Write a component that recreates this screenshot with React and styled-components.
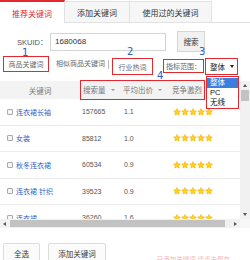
import React from "react";
import styled, { createGlobalStyle } from "styled-components";

const RED = "#e3282e";
const BLUE_NUM = "#2b5cc9";

const GlobalStyle = createGlobalStyle`
  html, body {
    margin: 0;
    padding: 0;
    background: #fff;
  }
  body {
    font-family: "Liberation Sans", "Noto Sans CJK SC", sans-serif;
    color: #333;
  }
`;

const Page = styled.div`
  width: 250px;
  height: 260px;
  overflow: hidden;
  position: relative;
  background: #fff;
`;

const TabBar = styled.div`
  display: flex;
  height: 22px;
  border-bottom: 1px solid #e2e2e2;
`;

const Tab = styled.div`
  box-sizing: border-box;
  width: ${(p) => p.$w}px;
  display: flex;
  align-items: center;
  justify-content: center;
  font-size: 8px;
  margin-top: ${(p) => (p.$active ? 0 : 1)}px;
  color: ${(p) => (p.$active ? RED : "#333")};
  background: ${(p) => (p.$active ? "#fff" : "#f6f6f6")};
  border-top: ${(p) => (p.$active ? `2px solid ${RED}` : "1px solid #e2e2e2")};
  border-right: 1px solid #e2e2e2;
  margin-bottom: ${(p) => (p.$active ? "-1px" : "0")};
  padding-top: 1px;
`;

const SkuRow = styled.div`
  display: flex;
  align-items: center;
  height: 21px;
  margin-top: 8px;
  padding-left: 17px;
`;

const Label = styled.span`
  width: 33px;
  font-size: 7.5px;
  color: #555;
`;

const Input = styled.div`
  box-sizing: border-box;
  width: 116px;
  height: 18px;
  border: 1px solid #d4d4d4;
  display: flex;
  align-items: center;
  padding-left: 4px;
  font-size: 8px;
  color: #333;
`;

const SearchButton = styled.div`
  box-sizing: border-box;
  margin-left: 11px;
  width: 28px;
  height: 21px;
  border: 1px solid #d6d6d6;
  background: #f1f1f1;
  display: flex;
  align-items: center;
  justify-content: center;
  font-size: 7.5px;
  color: #333;
`;

const FilterRow = styled.div`
  display: flex;
  align-items: flex-start;
  height: 19px;
  margin-top: 4px;
  padding-left: 3px;
  font-size: 7px;
  color: #666;
  position: relative;
  z-index: 5;
`;

const Marked = styled.div`
  position: relative;
  box-sizing: border-box;
  display: flex;
  align-items: center;
  justify-content: center;
  width: ${(p) => p.$w}px;
  height: ${(p) => p.$h}px;
  margin-top: ${(p) => p.$dy || 0}px;
  margin-left: ${(p) => p.$ml || 0}px;
  border: 1.5px solid ${RED};
  background: #fff;
`;

const Badge = styled.span`
  position: absolute;
  top: ${(p) => p.$top || -12}px;
  left: ${(p) => p.$x}px;
  font-family: "DejaVu Sans", sans-serif;
  font-size: 10px;
  line-height: 10px;
  color: ${BLUE_NUM};
`;

const Plain = styled.span`
  margin-left: 7px;
  line-height: 16px;
  color: #666;
`;

const Sep = styled.span`
  width: 1px;
  height: 9px;
  margin: 4px 3px 0;
  background: #bbb;
`;

const Select = styled(Marked)`
  justify-content: flex-start;
  padding-left: 4px;
  gap: 5px;
  color: #222;
  font-size: 7.5px;
`;

const Caret = styled.span`
  width: 0;
  height: 0;
  border-left: 2px solid transparent;
  border-right: 2px solid transparent;
  border-top: 3px solid #222;
`;

const DropList = styled.div`
  position: absolute;
  top: 17px;
  left: 0;
  width: 33px;
  box-sizing: border-box;
  border: 1.5px solid ${RED};
  background: #fff;
  padding: 0.5px 0;
`;

const DropItem = styled.div`
  height: 10px;
  line-height: 10px;
  padding-left: 3px;
  font-size: 7.5px;
  color: ${(p) => (p.$on ? "#fff" : "#111")};
  background: ${(p) => (p.$on ? "#3a7fe0" : "#fff")};
`;

const TableFrame = styled.div`
  margin-top: 6px;
  display: grid;
  grid-template-columns: 240px 10px;
  grid-template-rows: 138px 9px;
  height: 147px;
`;

const Body = styled.div`
  clip-path: inset(-20px 0 0 0);
  position: relative;
  z-index: 1;
`;

const HeadRow = styled.div`
  display: flex;
  height: 18px;
  align-items: center;
  background: #f3f3f3;
  font-size: 7.5px;
  color: #777;
`;

const HeadCell = styled.div`
  width: ${(p) => p.$w}px;
  display: flex;
  align-items: center;
  justify-content: ${(p) => (p.$center ? "center" : "flex-start")};
  gap: 5px;
  white-space: nowrap;
  overflow: hidden;
`;

const HeadGroup = styled(Marked)`
  justify-content: flex-start;
  padding-left: 1px;
  background: transparent;
`;

const SortCaret = styled.span`
  width: 0;
  height: 0;
  border-left: 2px solid transparent;
  border-right: 2px solid transparent;
  border-top: 2.5px solid #999;
`;

const Row = styled.div`
  display: grid;
  grid-template-columns: 80px 42px 48px 70px;
  height: 26.5px;
  align-items: center;
  border-bottom: 1px solid #ececec;
  box-sizing: border-box;
  font-size: 7px;
  color: #555;
`;

const KeyCell = styled.div`
  display: flex;
  align-items: center;
  padding-left: 7px;
  gap: 3px;
  color: #2f62c6;
  white-space: nowrap;
`;

const Check = styled.span`
  box-sizing: border-box;
  width: 6px;
  height: 6px;
  border: 1px solid #a9a9a9;
  border-radius: 1px;
  background: #f4f4f4;
`;

const NumCell = styled.div`
  padding-left: ${(p) => p.$pl}px;
`;

const Stars = styled.div`
  display: flex;
  padding-left: 3px;
  gap: 0;
`;

const VScroll = styled.div`
  background: #f1f1f1;
  display: flex;
  flex-direction: column;
  align-items: center;
  padding: 3px 0;
  box-sizing: border-box;
`;

const HScroll = styled.div`
  background: #f1f1f1;
  display: flex;
  align-items: center;
  padding: 0 3px;
  gap: 4px;
`;

const Corner = styled.div`
  background: #f7f7f7;
`;

const Thumb = styled.div`
  background: #c2c2c2;
  ${(p) =>
    p.$vertical
      ? "width: 8px; height: 11px; margin-top: 3px;"
      : "flex: 1; height: 7px; margin-right: 5px;"}
`;

const Arrow = styled.span`
  width: 0;
  height: 0;
  ${(p) =>
    p.$dir === "up"
      ? "border-left: 2px solid transparent; border-right: 2px solid transparent; border-bottom: 3px solid #555;"
      : p.$dir === "down"
      ? "border-left: 2px solid transparent; border-right: 2px solid transparent; border-top: 3px solid #555; margin-top: auto;"
      : p.$dir === "left"
      ? "border-top: 2px solid transparent; border-bottom: 2px solid transparent; border-right: 3px solid #555;"
      : "border-top: 2px solid transparent; border-bottom: 2px solid transparent; border-left: 3px solid #555;"}
`;

const Footer = styled.div`
  display: flex;
  align-items: flex-start;
  margin-top: 15px;
  padding-left: 3px;
`;

const Button = styled.div`
  box-sizing: border-box;
  width: ${(p) => p.$w}px;
  height: 20px;
  margin-left: ${(p) => p.$ml || 0}px;
  border: 1px solid #dcdcdc;
  border-radius: 2px;
  background: #fbfbfb;
  display: flex;
  align-items: center;
  justify-content: center;
  font-size: 7.5px;
  color: #333;
`;

const Hint = styled.span`
  margin-left: auto;
  margin-right: 20px;
  margin-top: 11px;
  font-size: 6.5px;
  color: #f4b0b0;
  white-space: nowrap;
`;

function Star() {
  return (
    <svg width="8" height="8" viewBox="0 0 24 24">
      <path
        d="M12 1.8l3.1 6.5 7.1.9-5.2 4.9 1.3 7-6.3-3.4-6.3 3.4 1.3-7L1.8 9.2l7.1-.9z"
        fill="#ffd31a"
        stroke="#f2a900"
        strokeWidth="1.6"
        strokeLinejoin="round"
      />
    </svg>
  );
}

const rows = [
  { kw: "连衣裙长袖", n: "157665", p: "1.1" },
  { kw: "女装", n: "85812", p: "1.0" },
  { kw: "秋冬连衣裙", n: "60534", p: "0.9" },
  { kw: "连衣裙 针织", n: "39523", p: "0.9" },
  { kw: "连衣裙", n: "36260", p: "1.6" },
];

export default function App() {
  return (
    <Page>
      <GlobalStyle />
      <TabBar>
        <Tab $w={65} $active>
          推荐关键词
        </Tab>
        <Tab $w={65}>添加关键词</Tab>
        <Tab $w={82}>使用过的关键词</Tab>
      </TabBar>

      <SkuRow>
        <Label>SKUID：</Label>
        <Input>1680068</Input>
        <SearchButton>搜索</SearchButton>
      </SkuRow>

      <FilterRow>
        <Marked $w={46} $h={16}>
          商品关键词
          <Badge $x={18} $top={-9.5}>1</Badge>
        </Marked>
        <Plain>相似商品关键词</Plain>
        <Sep />
        <Marked $w={41} $h={17} $dy={2}>
          行业热词
          <Badge $x={14} $top={-12}>2</Badge>
        </Marked>
        <Marked $w={41} $h={14} $dy={3} $ml={10}>
          指标范围：
          <Badge $x={35} $top={-13}>3</Badge>
        </Marked>
        <Select $w={33} $h={17} $dy={2} $ml={1}>
          整体
          <Caret />
          <DropList>
            <DropItem $on>整体</DropItem>
            <DropItem>PC</DropItem>
            <DropItem>无线</DropItem>
          </DropList>
        </Select>
      </FilterRow>

      <TableFrame>
        <Body>
          <HeadRow>
            <HeadCell $w={80} $center>
              关键词
            </HeadCell>
            <HeadGroup $w={125} $h={20} $dy={-1}>
              <Badge $x={76} $top={-10}>4</Badge>
              <HeadCell $w={41}>
                <span style={{ paddingLeft: 1 }}>搜索量</span>
                <SortCaret />
              </HeadCell>
              <HeadCell $w={49}>
                平均出价
                <SortCaret />
              </HeadCell>
              <HeadCell $w={31}>竞争激烈</HeadCell>
            </HeadGroup>
          </HeadRow>
          {rows.map((r) => (
            <Row key={r.kw}>
              <KeyCell>
                <Check />
                {r.kw}
              </KeyCell>
              <NumCell $pl={2}>{r.n}</NumCell>
              <NumCell $pl={2}>{r.p}</NumCell>
              <Stars>
                {[0, 1, 2, 3, 4].map((i) => (
                  <Star key={i} />
                ))}
              </Stars>
            </Row>
          ))}
        </Body>
        <VScroll>
          <Arrow $dir="up" />
          <Thumb $vertical />
          <Arrow $dir="down" />
        </VScroll>
        <HScroll>
          <Arrow $dir="left" />
          <Thumb />
          <Arrow $dir="right" />
        </HScroll>
        <Corner />
      </TableFrame>

      <Footer>
        <Button $w={37}>全选</Button>
        <Button $w={58} $ml={8}>
          添加关键词
        </Button>
        <Hint>已添加关键词 请点击保存</Hint>
      </Footer>
    </Page>
  );
}
